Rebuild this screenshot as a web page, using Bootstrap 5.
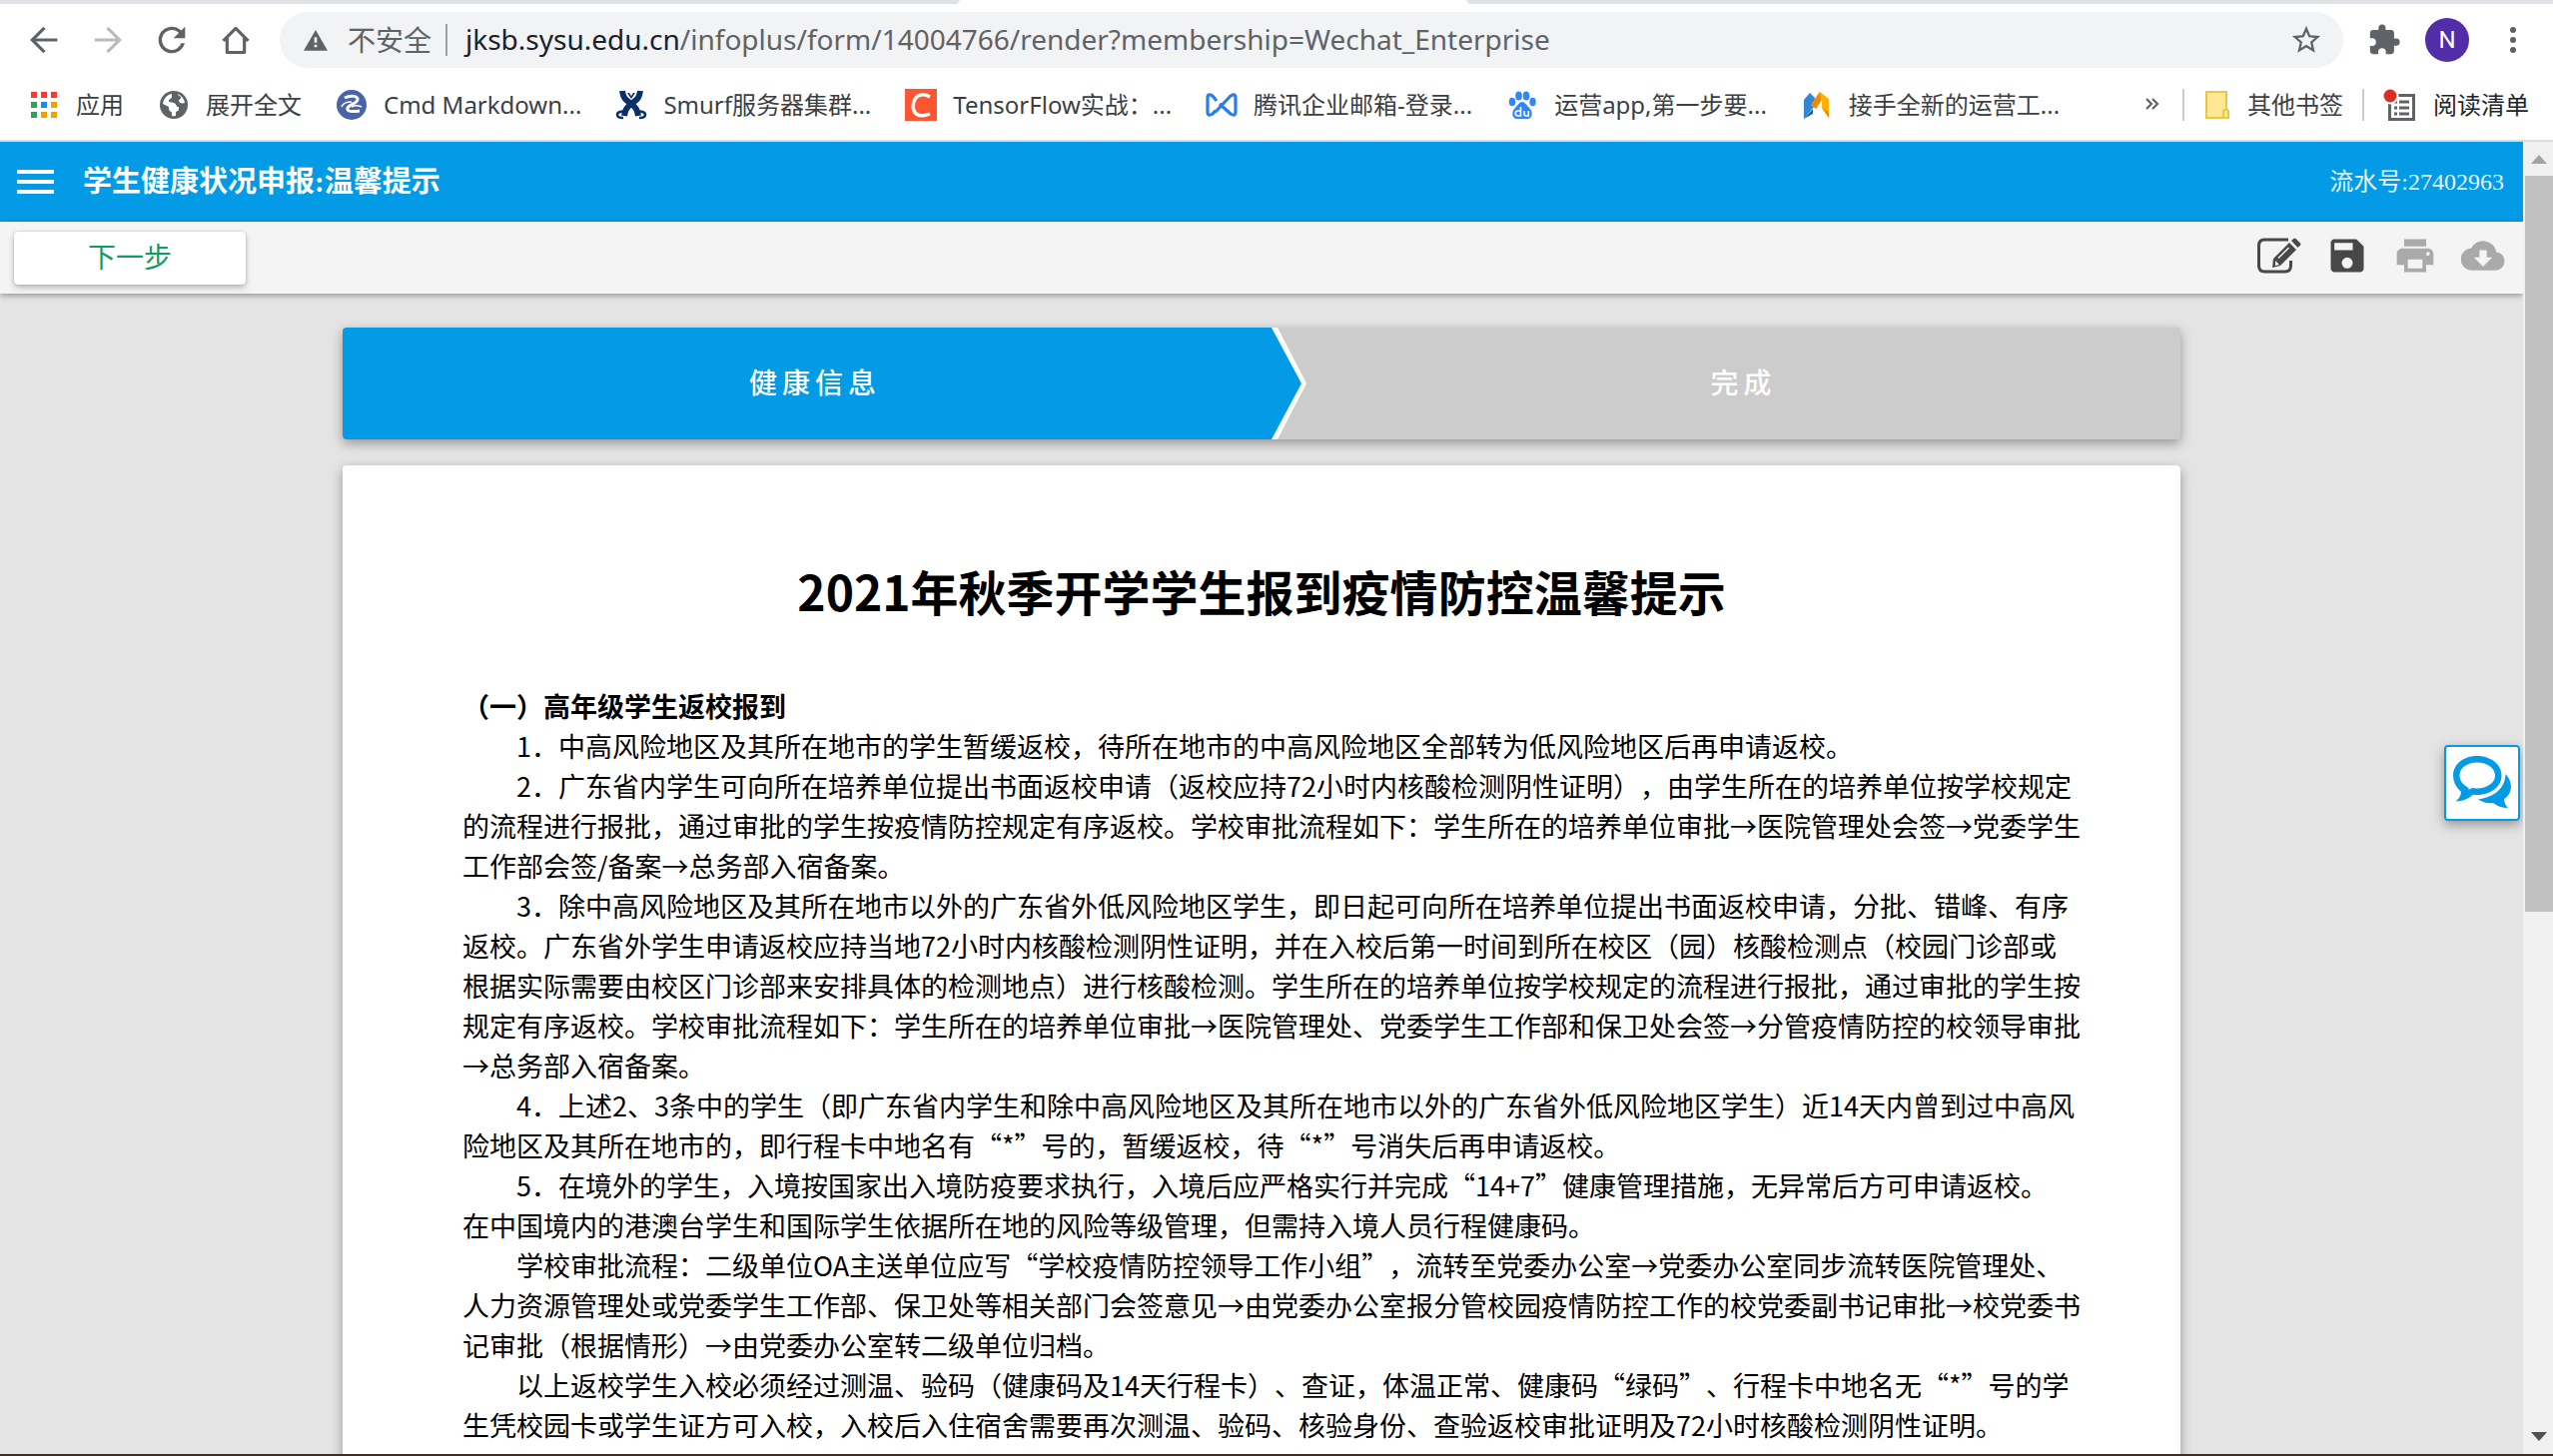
<!DOCTYPE html>
<html lang="zh-CN">
<head>
<meta charset="utf-8">
<meta name="viewport" content="width=device-width, initial-scale=1">
<title>学生健康状况申报:温馨提示</title>
<link href="https://cdn.jsdelivr.net/npm/bootstrap@5.3.0/dist/css/bootstrap.min.css" rel="stylesheet">
<style>
  :root { --blue: #039be5; --ink: #5f6368; }
  body { font-family: "Noto Sans CJK SC", sans-serif; text-spacing-trim: space-all; color: #000; }
  svg { display: block; flex: none; }

  /* browser frame */
  .ui-font { font-family: "Noto Sans", "Noto Sans CJK SC", sans-serif; }
  .tab-strip { height: 4px; background: #dee1e6; padding-left: 37.5%; }
  .tab-active { width: 32%; height: 4px; background: #fff; border-radius: 4px 4px 0 0; }
  .nav-row { height: 72px; padding: 0 20px 0 24px; gap: 24px; color: var(--ink); }
  .plain-btn { border: 0; background: none; padding: 0; color: inherit; }
  .omnibox { height: 56px; border-radius: 28px; background: #f1f3f4; padding: 0 20px; }
  .insecure { font-size: 28px; line-height: 32px; color: var(--ink); }
  .omni-rule { width: 2px; height: 32px; background: #9aa0a6; margin: 0 18px 0 14px; }
  .url-text { font-size: 28px; line-height: 36px; color: #5f6368; padding-bottom: 2px; }
  .url-text b { font-weight: 400; color: #202124; }
  .avatar { width: 44px; height: 44px; border-radius: 50%; background: #512da8; color: #fff; font-size: 24px; line-height: 44px; font-family: Roboto, sans-serif; }
  .marks-row { height: 66px; padding: 0 24px 6px 28px; gap: 34px; border-bottom: 2px solid #dadce0; }
  .bm { display: flex; align-items: center; gap: 16px; font-size: 24px; line-height: 32px; color: #3c4043; text-decoration: none; white-space: nowrap; }
  .bm-rule { width: 2px; height: 32px; background: #ccc; }
  .marks-end { gap: 19px; }

  /* application */
  .view { min-height: 0; background: #e4e4e4; }
  .app-bar { height: 80px; background: var(--blue); color: #fff; padding: 0 19px 0 17px; font-family: "Liberation Serif", "Noto Sans CJK SC", serif; }
  .app-title { font-size: 29px; line-height: 40px; font-weight: 700; margin: 0 0 0 29px; }
  .app-serial { font-size: 24px; line-height: 32px; color: #e1f3fc; }
  .tool-bar { height: 72px; background: #f4f4f4; padding: 0 18px 0 14px; box-shadow: 0 2px 6px rgba(0,0,0,.35); position: relative; }
  .next-btn { width: 232px; height: 53px; border: 0; border-radius: 4px; background: #fff; color: #0f9d63; font-size: 28px; line-height: 40px; padding: 0 0 4px; box-shadow: 0 3px 6px rgba(0,0,0,.25), 0 0 2px rgba(0,0,0,.2); }
  .tools { gap: 24px; color: #484848; padding-bottom: 4px; }
  .tools button:disabled { color: #aaa; }

  .sheet-col { width: 73%; max-width: 1840px; margin: 34px auto 0; gap: 26px; }
  .steps { height: 112px; border-radius: 4px; background: #ccc; color: #fff; font-size: 28px; line-height: 40px; font-weight: 500; box-shadow: 0 4px 12px rgba(0,0,0,.35); list-style: none; padding: 0; margin: 0; }
  .steps li { display: flex; align-items: center; justify-content: center; }
  .step-edge { width: 965px; height: 112px; background: #fff; clip-path: polygon(0 0, 936px 0, 100% 50%, 936px 100%, 0 100%); border-radius: 4px 0 0 4px; }
  .step-now { width: 960px; height: 112px; background: var(--blue); padding-right: 14px; clip-path: polygon(0 0, 930px 0, 100% 50%, 930px 100%, 0 100%); border-radius: 4px 0 0 4px; }
  .step-text { letter-spacing: 5px; padding-bottom: 4px; }
  .sheet { background: #fff; border-radius: 4px; padding: 93px 96px 40px 120px; box-shadow: 0 4px 12px rgba(0,0,0,.35); }
  .sheet h1 { font-size: 48px; line-height: 64px; font-weight: 700; margin: 0 24px 64px 0; }
  .sheet h2 { font-size: 27px; line-height: 40px; font-weight: 700; margin: 0; }
  .sheet p { font-size: 27px; line-height: 40px; margin: 0; text-indent: 2em; white-space: nowrap; }

  .chat-btn { position: absolute; right: 3px; top: 604px; width: 76px; height: 76px; border: 2px solid var(--blue); border-radius: 4px; background: #fff; padding: 6px; box-shadow: 0 4px 12px rgba(0,0,0,.35); }
  .scroll-bar { width: 30px; background: #f0f0f0; padding: 13px 0 13px 2px; }
  .scroll-thumb { background: #c1c1c1; height: 737px; margin-top: 12px; }
  .desk-edge { height: 2px; background: #3b2f2a; }
</style>
</head>
<body class="d-flex flex-column vh-100 overflow-hidden bg-white">

<header class="ui-font flex-shrink-0">
  <div class="tab-strip"><div class="tab-active"></div></div>
  <nav class="nav-row d-flex align-items-center" aria-label="导航">
    <button class="plain-btn" aria-label="后退"><svg width="40" height="40" viewBox="0 0 24 24" fill="none" stroke="currentColor" stroke-width="1.9"><path d="M20 12H5M12.300 4.700L5 12l7.300 7.300"/></svg></button>
    <button class="plain-btn" aria-label="前进"><svg width="40" height="40" viewBox="0 0 24 24" fill="none" stroke="#babcbe" stroke-width="1.9"><path d="M4 12h15M11.700 4.700L19 12l-7.300 7.300"/></svg></button>
    <button class="plain-btn" aria-label="重新加载"><svg width="40" height="40" viewBox="0 0 24 24" fill="currentColor"><path d="M17.650 6.350A7.960 7.960 0 0 0 12 4a8 8 0 1 0 7.730 10h-2.080A6 6 0 1 1 12 6c1.660 0 3.140.69 4.220 1.780L13 11h7V4z"/></svg></button>
    <button class="plain-btn" aria-label="主页"><svg width="40" height="40" viewBox="0 0 24 24" fill="none" stroke="currentColor" stroke-width="1.9" stroke-linejoin="round"><path d="M4.500 12.500L12 5l7.500 7.500M6.800 11v8.500h10.400V11"/></svg></button>
    <div class="omnibox d-flex align-items-center flex-grow-1">
      <svg width="32" height="32" viewBox="0 0 24 24" fill="var(--ink)"><path fill-rule="evenodd" d="M3 20h18L12 4.500zM11 10h2v4h-2zm0 5.500h2v2h-2z"/></svg>
      <span class="insecure ms-3">不安全</span>
      <span class="omni-rule"></span>
      <span class="url-text flex-grow-1"><b>jksb.sysu.edu.cn</b>/infoplus/form/14004766/render?membership=Wechat_Enterprise</span>
      <button class="plain-btn" aria-label="为此页添加书签"><svg width="34" height="34" viewBox="0 0 24 24" fill="currentColor"><path d="M22 9.240l-7.190-.62L12 2 9.190 8.630 2 9.240l5.460 4.730L5.820 21 12 17.270 18.180 21l-1.630-7.030zM12 15.400l-3.760 2.270 1-4.280-3.320-2.880 4.380-.38L12 6.100l1.710 4.040 4.380.38-3.320 2.880 1 4.280z"/></svg></button>
    </div>
    <button class="plain-btn" aria-label="扩展程序"><svg width="34" height="34" viewBox="0 0 24 24" fill="currentColor"><path d="M20.500 11H19V7c0-1.100-.9-2-2-2h-4V3.500a2.500 2.500 0 0 0-5 0V5H4c-1.100 0-2 .9-2 2v3.800h1.500a2.700 2.700 0 0 1 0 5.400H2V20c0 1.100.9 2 2 2h3.800v-1.500a2.700 2.700 0 0 1 5.400 0V22H17c1.100 0 2-.9 2-2v-4h1.500a2.500 2.500 0 0 0 0-5z"/></svg></button>
    <button class="plain-btn avatar" aria-label="用户 N">N</button>
    <button class="plain-btn" aria-label="菜单"><svg width="40" height="40" viewBox="0 0 40 40" fill="currentColor"><circle cx="20" cy="10" r="3"/><circle cx="20" cy="20" r="3"/><circle cx="20" cy="30" r="3"/></svg></button>
  </nav>

  <nav class="marks-row d-flex align-items-center" aria-label="书签">
    <a class="bm" href="#"><svg width="32" height="32" viewBox="0 0 32 32"><path fill="#f53c31" d="M3 3h6v6H3zM13 3h6v6h-6zM23 3h6v6h-6z"/><path fill="#34a05a" d="M3 13h6v6H3zM3 23h6v6H3z"/><path fill="#1e88f5" d="M13 13h6v6h-6z"/><path fill="#f2a200" d="M23 13h6v6h-6zM13 23h6v6h-6zM23 23h6v6h-6z"/></svg>应用</a>
    <a class="bm" href="#"><svg width="32" height="32" viewBox="0 0 32 32"><circle cx="16" cy="16" r="14" fill="#5f6368"/><path fill="#fff" d="M5 15c1-6 5-9.500 9-10v3c0 2-3 2-3 4s4 1 6 2.500 1 3.500 4 3.500v3c0 1.500-3 1-3 3v3c-2 .5-3 .3-4 .1V24c0-1.500-3-1.500-3-4v-2zM20 5c4 2 6.500 5 7 9-3 1-6 0-6-2s3-2 2-4c-.5-1-3-1-3-3z"/></svg>展开全文</a>
    <a class="bm" href="#"><svg width="32" height="32" viewBox="0 0 32 32"><circle cx="16" cy="16" r="15" fill="#4a64a8"/><path fill="none" stroke="#fff" stroke-width="3" d="M9 9c6-3 14-2 13 2s-8 4-10 8 6 4 12 3"/><path fill="none" stroke="#fff" stroke-width="1.500" d="M6 18c1-3 5-5 10-5M16 18c4-2 8-1 10 0"/></svg>Cmd Markdown...</a>
    <a class="bm" href="#"><svg width="32" height="32" viewBox="0 0 32 32"><g fill="none" stroke="#0b2f6b"><path stroke-width="6" d="M7 2c1 8 4 9 9 13s6 6 7 12M25 2c-1 8-4 9-9 13s-6 6-7 12"/><path stroke-width="2.500" d="M11 23c-5-1-9 0-9 3s3 3 6 3M21 23c5-1 9 0 9 3s-3 3-6 3"/></g><path fill="#0b2f6b" d="M12 4h8l-4 6z"/><path fill="#fff" d="M14 4h4l-2 3z"/></svg>Smurf服务器集群...</a>
    <a class="bm" href="#"><svg width="32" height="32" viewBox="0 0 32 32"><path fill="#fc5531" d="M0 0h32v32H0z"/><path fill="none" stroke="#fff" stroke-width="3.500" d="M25 8c-7-4.500-15-2-16.500 7S13 30 25 25"/></svg>TensorFlow实战：...</a>
    <a class="bm" href="#"><svg width="32" height="32" viewBox="0 0 32 32" fill="none" stroke="#2b7de9" stroke-width="3.200" stroke-linejoin="round"><path d="M10 22l-3 3q-5 3-5-2V9q0-5 5-2l4 5M14 15l11 10q5 3 5-2V9q0-5-5-2L10 23"/></svg>腾讯企业邮箱-登录...</a>
    <a class="bm" href="#"><svg width="32" height="32" viewBox="0 0 32 32" fill="#3385ff"><ellipse cx="6" cy="13" rx="3.200" ry="4.300"/><ellipse cx="12.500" cy="7" rx="3.300" ry="4.500"/><ellipse cx="20" cy="7" rx="3.300" ry="4.500"/><ellipse cx="26.500" cy="13" rx="3.200" ry="4.300"/><path d="M16 13c3 0 5 4 8 7 3 4 2 10-3 10H11c-5 0-6-6-3-10 3-3 5-7 8-7z"/><path fill="none" stroke="#fff" stroke-width="1.600" d="M14.500 18v9h-2.700a2.400 2.400 0 0 1 0-5h2.700M18 22v3q0 2 2 2h2.300v-5"/></svg>运营app,第一步要...</a>
    <a class="bm" href="#"><svg width="32" height="32" viewBox="0 0 32 32"><path fill="#2f86d6" d="M3 30V11l6-7 5 5-1 9z"/><path fill="#1b62ad" d="M3 30l9-10v5z"/><path fill="#ffb100" d="M10 16l9-13 9 7v19l-7-10V11l-6 9z"/><path fill="#f08a00" d="M19 3l-9 13 5 4 5-8zM21 19l7 10v-6z"/></svg>接手全新的运营工...</a>
    <span class="marks-end ms-auto d-flex align-items-center">
      <button class="plain-btn me-1" aria-label="更多书签"><svg width="14" height="18" viewBox="0 0 14 18" fill="none" stroke="#5f6368" stroke-width="2.200"><path d="M1 3l5 5-5 5M7 3l5 5-5 5"/></svg></button>
      <span class="bm-rule"></span>
      <a class="bm" href="#"><svg width="28" height="32" viewBox="0 0 28 32"><path fill="#ffe793" stroke="#e8c745" stroke-width="2" d="M3 3h20v17l2 3v6H3z"/><path fill="#ffe793" stroke="#e8c745" stroke-width="2" d="M20 29v-7q2.500-3 5 0v5q0 2-2 2z"/></svg>其他书签</a>
      <span class="bm-rule"></span>
      <a class="bm text-dark" href="#"><svg width="34" height="34" viewBox="0 0 34 34"><path fill="none" stroke="#5f6368" stroke-width="3" d="M6.500 7.500h24v24h-24z"/><path stroke="#5f6368" stroke-width="3" d="M11 14h3M16 14h10M11 20h3M16 20h10M11 26h3M16 26h10"/><circle cx="7" cy="8" r="8.500" fill="#fff"/><circle cx="7" cy="8" r="6.500" fill="#d93025"/></svg>阅读清单</a>
    </span>
  </nav>
</header>

<div class="view d-flex flex-grow-1 overflow-hidden">
  <main class="flex-grow-1 position-relative overflow-hidden">
    <div class="app-bar d-flex align-items-center">
      <button class="plain-btn" aria-label="菜单"><svg width="37" height="24" viewBox="0 0 37 24" fill="currentColor"><path d="M0 0h37v4H0zM0 10h37v4H0zM0 20h37v4H0z"/></svg></button>
      <h1 class="app-title">学生健康状况申报:温馨提示</h1>
      <span class="app-serial ms-auto">流水号:27402963</span>
    </div>
    <div class="tool-bar d-flex align-items-center">
      <button class="next-btn">下一步</button>
      <div class="tools d-flex align-items-center ms-auto">
        <button class="plain-btn" aria-label="编辑"><svg width="44" height="44" viewBox="0 0 44 44"><path fill="none" stroke="currentColor" stroke-width="3" d="M31 6H7q-5.500 0-5.500 6v20q0 6 6 6h20q6 0 6-6v-5"/><path fill="currentColor" d="M15 34l1-9L32 9l7 7-16 16z"/><path fill="#f4f4f4" d="M18 27l4 4-4 1zM20.500 24L31 13.500l1 1L21.500 25z"/><path fill="currentColor" d="M34 7l3-2.500q1 0 2 1l4 4q1 1 0 2L40.500 14z"/></svg></button>
        <button class="plain-btn" aria-label="保存"><svg width="44" height="44" viewBox="0 0 24 24" fill="currentColor"><path d="M17 3H5c-1.110 0-2 .9-2 2v14c0 1.100.89 2 2 2h14c1.100 0 2-.9 2-2V7zm-5 16a3 3 0 1 1 0-6 3 3 0 0 1 0 6zm3-10H5V5h10z"/></svg></button>
        <button class="plain-btn" disabled aria-label="打印"><svg width="44" height="44" viewBox="0 0 24 24" fill="currentColor"><path d="M19 8H5c-1.660 0-3 1.340-3 3v6h4v4h12v-4h4v-6c0-1.660-1.340-3-3-3zm-3 11H8v-5h8zm3-7a1 1 0 1 1 0-2 1 1 0 0 1 0 2zm-1-9H6v4h12z"/></svg></button>
        <button class="plain-btn" disabled aria-label="下载"><svg width="44" height="44" viewBox="0 0 24 24" fill="currentColor"><path d="M19.350 10.040A7.490 7.490 0 0 0 5.350 8.040 5.990 5.990 0 0 0 6 20h13a5 5 0 0 0 .35-9.960zM17 13l-5 5-5-5h3V9h4v4z"/></svg></button>
      </div>
    </div>

    <div class="sheet-col d-flex flex-column">
      <ol class="steps d-flex">
        <li class="step-edge justify-content-start"><div class="step-now d-flex align-items-center justify-content-center"><span class="step-text">健康信息</span></div></li>
        <li class="flex-grow-1"><span class="step-text">完成</span></li>
      </ol>
      <article class="sheet">
        <h1 class="text-center">2021年秋季开学学生报到疫情防控温馨提示</h1>
        <h2>（一）高年级学生返校报到</h2>
        <p>1．中高风险地区及其所在地市的学生暂缓返校，待所在地市的中高风险地区全部转为低风险地区后再申请返校。</p>
        <p>2．广东省内学生可向所在培养单位提出书面返校申请（返校应持72小时内核酸检测阴性证明），由学生所在的培养单位按学校规定<br>的流程进行报批，通过审批的学生按疫情防控规定有序返校。学校审批流程如下：学生所在的培养单位审批→医院管理处会签→党委学生<br>工作部会签/备案→总务部入宿备案。</p>
        <p>3．除中高风险地区及其所在地市以外的广东省外低风险地区学生，即日起可向所在培养单位提出书面返校申请，分批、错峰、有序<br>返校。广东省外学生申请返校应持当地72小时内核酸检测阴性证明，并在入校后第一时间到所在校区（园）核酸检测点（校园门诊部或<br>根据实际需要由校区门诊部来安排具体的检测地点）进行核酸检测。学生所在的培养单位按学校规定的流程进行报批，通过审批的学生按<br>规定有序返校。学校审批流程如下：学生所在的培养单位审批→医院管理处、党委学生工作部和保卫处会签→分管疫情防控的校领导审批<br>→总务部入宿备案。</p>
        <p>4．上述2、3条中的学生（即广东省内学生和除中高风险地区及其所在地市以外的广东省外低风险地区学生）近14天内曾到过中高风<br>险地区及其所在地市的，即行程卡中地名有“*”号的，暂缓返校，待“*”号消失后再申请返校。</p>
        <p>5．在境外的学生，入境按国家出入境防疫要求执行，入境后应严格实行并完成“14+7”健康管理措施，无异常后方可申请返校。<br>在中国境内的港澳台学生和国际学生依据所在地的风险等级管理，但需持入境人员行程健康码。</p>
        <p>学校审批流程：二级单位OA主送单位应写“学校疫情防控领导工作小组”，流转至党委办公室→党委办公室同步流转医院管理处、<br>人力资源管理处或党委学生工作部、保卫处等相关部门会签意见→由党委办公室报分管校园疫情防控工作的校党委副书记审批→校党委书<br>记审批（根据情形）→由党委办公室转二级单位归档。</p>
        <p>以上返校学生入校必须经过测温、验码（健康码及14天行程卡）、查证，体温正常、健康码“绿码”、行程卡中地名无“*”号的学<br>生凭校园卡或学生证方可入校，入校后入住宿舍需要再次测温、验码、核验身份、查验返校审批证明及72小时核酸检测阴性证明。</p>
      </article>
    </div>

    <button class="chat-btn" aria-label="在线咨询"><svg width="60" height="60" viewBox="0 0 60 60"><path fill="var(--blue)" fill-rule="evenodd" d="M25 3c14 0 24.500 8.500 24.500 19.500S39 42 25 42q-2 0-4-.3Q14 48 3.500 48.500 9 44 9 39 1 32 1 22.500C1 11.500 11 3 25 3zm0 6.500C15 9.500 7.500 15 7.500 22.500c0 6 4 9.500 9 12.500v2q2-2 5-2 2 .5 3.500.5c10 0 18-5.500 18-13S35 9.500 25 9.500z"/><path fill="var(--blue)" d="M53.500 21C61 29 61 40 52 46q0 5 4 9-9 0-15-5-8 1-15-3.500C42 44 53 36 53.500 21z"/></svg></button>
  </main>
  <div class="scroll-bar d-flex flex-column flex-shrink-0" aria-hidden="true">
    <svg class="mx-auto" width="16" height="9" viewBox="0 0 16 9"><path fill="#a3a3a3" d="M0 9l8-9 8 9z"/></svg>
    <div class="scroll-thumb"></div>
    <svg class="mx-auto mt-auto" width="16" height="9" viewBox="0 0 16 9"><path fill="#505050" d="M0 0l8 9 8-9z"/></svg>
  </div>
</div>
<div class="desk-edge flex-shrink-0"></div>

<script src="https://cdn.jsdelivr.net/npm/bootstrap@5.3.0/dist/js/bootstrap.bundle.min.js"></script>
</body>
</html>
